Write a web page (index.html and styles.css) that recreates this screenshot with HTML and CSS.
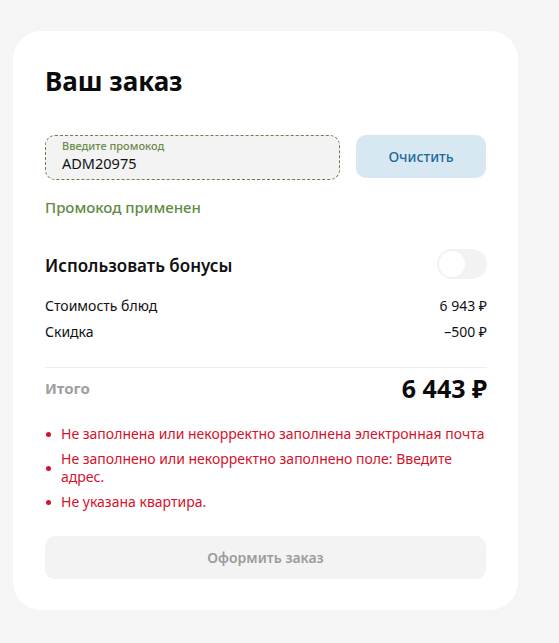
FILE: index.html
```html
<!DOCTYPE html>
<html lang="ru">
<head>
<meta charset="utf-8">
<title>Ваш заказ</title>
<link rel="stylesheet" href="styles.css">
</head>
<body>
<div class="card">
  <h1 class="title">Ваш заказ</h1>
  <div class="promo">
    <div class="promo-field">
      <span class="promo-label">Введите промокод</span>
      <span class="promo-value">ADM20975</span>
    </div>
    <button class="btn-clear">Очистить</button>
  </div>
  <div class="promo-note">Промокод применен</div>
  <div class="bonus">
    <span class="bonus-title">Использовать бонусы</span>
    <span class="toggle"><span class="knob"></span></span>
  </div>
  <div class="lines">
    <div class="line"><span>Стоимость блюд</span><span>6 943 ₽</span></div>
    <div class="line"><span>Скидка</span><span>–500 ₽</span></div>
  </div>
  <div class="total">
    <span class="total-label">Итого</span>
    <span class="total-value">6 443 ₽</span>
  </div>
  <ul class="errors">
    <li>Не заполнена или некорректно заполнена электронная почта</li>
    <li>Не заполнено или некорректно заполнено поле: Введите адрес.</li>
    <li>Не указана квартира.</li>
  </ul>
  <button class="btn-submit" disabled>Оформить заказ</button>
</div>
</body>
</html>
```
FILE: styles.css
```css
* { box-sizing: border-box; }
html, body { margin: 0; padding: 0; }
body {
  background: #f5f5f5;
  font-family: "Noto Sans", "Open Sans", sans-serif;
  color: #111;
  width: 559px;
  height: 643px;
  padding: 31px 0 0 13px;
}
.card {
  width: 505px;
  background: #fff;
  border-radius: 28px;
  padding: 32px 31px 31px 32px;
}
.title {
  margin: 0;
  font-size: 26px;
  line-height: 36px;
  font-weight: 700;
  color: #0b0b0b;
}
.promo {
  display: flex;
  gap: 16px;
  margin-top: 36px;
}
.promo-field {
  width: 295px;
  height: 45px;
  background: #f3f3f3;
  border: 1px dashed #6f7d52;
  border-radius: 10px;
  padding: 3px 16px 0;
  display: flex;
  flex-direction: column;
}
.promo-label {
  font-size: 11px;
  line-height: 14px;
  color: #6c8a4a;
  font-weight: 500;
}
.promo-value {
  font-size: 14.5px;
  line-height: 20px;
  color: #111;
}
.btn-clear {
  width: 130px;
  height: 43px;
  border: 0;
  border-radius: 10px;
  background: #d7e8f2;
  color: #1f6a9b;
  font-family: inherit;
  font-size: 14px;
  font-weight: 500;
}
.promo-note {
  margin-top: 17px;
  font-size: 15px;
  line-height: 20px;
  color: #5f8b45;
  font-weight: 500;
}
.bonus {
  margin-top: 32px;
  display: flex;
  justify-content: space-between;
  align-items: center;
}
.bonus-title {
  font-size: 17px;
  font-weight: 600;
  padding-top: 3px;
}
.toggle {
  width: 50px;
  height: 30px;
  border-radius: 15px;
  background: #f2f2f2;
  padding: 2px;
  display: flex;
}
.knob {
  width: 26px;
  height: 26px;
  border-radius: 50%;
  background: #fff;
}
.lines {
  margin-top: 17px;
  padding-bottom: 25px;
  border-bottom: 1px solid #ececec;
}
.line {
  display: flex;
  justify-content: space-between;
  font-size: 14px;
  line-height: 20px;
  margin-bottom: 6px;
}
.line:last-child { margin-bottom: 0; }
.total {
  margin-top: 3px;
  display: flex;
  justify-content: space-between;
  align-items: center;
}
.total-label {
  font-size: 15px;
  font-weight: 700;
  color: #a0a0a0;
}
.total-value {
  font-size: 25px;
  font-weight: 700;
  color: #0b0b0b;
}
.errors {
  list-style: none;
  margin: 20px 0 0;
  padding: 0;
  color: #d4122b;
  font-size: 14px;
  line-height: 18px;
}
.errors li {
  position: relative;
  padding-left: 16px;
  margin-bottom: 7px;
  display: flex;
  align-items: center;
}
.errors li::before {
  content: "";
  position: absolute;
  left: 1px;
  top: 50%;
  width: 5px;
  height: 5px;
  margin-top: -2px;
  border-radius: 50%;
  background: #d4122b;
}
.btn-submit {
  margin-top: 18px;
  width: 441px;
  height: 43px;
  border: 0;
  border-radius: 10px;
  background: #f3f3f3;
  color: #9c9c9c;
  font-family: inherit;
  font-size: 14px;
  font-weight: 600;
}
```
